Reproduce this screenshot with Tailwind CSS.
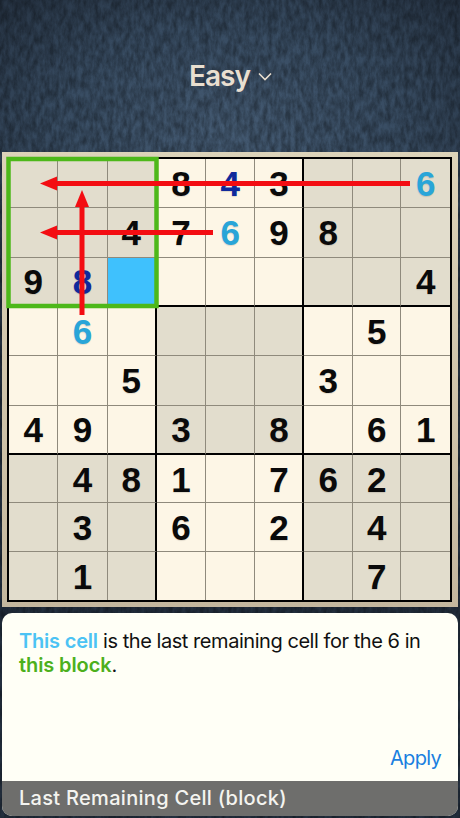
<!DOCTYPE html>
<html lang="en">
<head>
<meta charset="UTF-8">
<title>Sudoku hint</title>
<script src="https://cdn.jsdelivr.net/npm/@tailwindcss/browser@4"></script>
</head>
<body class="w-[460px] h-[818px] overflow-hidden relative bg-[#26384b] font-['Inter','Liberation_Sans',sans-serif]">

<!-- textured background -->
<div class="absolute inset-0 bg-[radial-gradient(ellipse_340px_200px_at_50%_130px,#445a72_0%,#384c62_50%,#232f3e_100%)]"></div>
<svg class="absolute inset-0 opacity-35" width="460" height="818">
    <filter id="grain">
        <feTurbulence type="fractalNoise" baseFrequency="0.22 0.09" numOctaves="4" seed="11"/>
        <feColorMatrix type="matrix" values="0 0 0 0 0  0 0 0 0 0  0 0 0 0 0  1.8 0 0 0 -0.45"/>
    </filter>
    <rect width="460" height="818" filter="url(#grain)"/>
</svg>

<div class="relative">
    <header class="h-[152px] flex items-center justify-center gap-[8px] pl-[1px]">
        <span class="text-[28px] font-semibold tracking-[-1px] text-[#e9dfd0]">Easy</span>
        <svg width="14" height="9" viewBox="0 0 14 9" class="mt-[1px]"><path d="M1 1.5 L7 7.5 L13 1.5" fill="none" stroke="#e9dfd0" stroke-width="1.6"/></svg>
    </header>

    <section class="relative mx-[2px] w-[456px] h-[455px] pt-[5px] pl-[5px] bg-gradient-to-b from-[#dcd3b9] to-[#c4b79e]">
        <div id="board" class="w-[445px] h-[445px] grid grid-cols-[49.3px_49.3px_49.4px_49.2px_49.2px_49.1px_48.5px_48.5px_48.5px] grid-rows-[49.3px_49.3px_49.4px_49.3px_49.3px_49.4px_48.3px_48.3px_48.4px] border-2 border-black font-['Liberation_Sans',sans-serif]"></div>
    </section>

    <!-- hint overlay -->
    <svg class="absolute left-0 top-0" width="460" height="620">
        <rect x="8.5" y="159" width="148" height="147" fill="none" stroke="#4db81a" stroke-width="4.5"/>
        <g fill="#f30d12" stroke="none">
            <rect x="56" y="181" width="354" height="5"/>
            <path d="M40 183.5 L57 176.5 L57 190.5 Z"/>
            <rect x="56" y="230" width="157" height="5"/>
            <path d="M40 232.5 L57 225.5 L57 239.5 Z"/>
            <rect x="79.5" y="206" width="5" height="109"/>
            <path d="M82 190 L75 207 L89 207 Z"/>
        </g>
    </svg>

    <section class="mt-[6px] mx-[2px] w-[456px] h-[203px] rounded-[10px] overflow-hidden bg-[#fffff6] flex flex-col">
        <div class="flex-1 relative pl-[17px] pt-[17px] pr-[20px] text-[20px] leading-[23.5px] tracking-[-0.45px] text-[#111]">
            <p><b class="font-semibold tracking-[-0.2px] text-[#4cc3f4]">This cell</b> is the last remaining cell for the 6 in <b class="font-semibold tracking-[-0.1px] text-[#4cb01c]">this block</b>.</p>
            <span class="absolute right-[17px] bottom-[11px] tracking-[-0.7px] text-[#1a7fe0]">Apply</span>
        </div>
        <footer class="h-[35px] bg-[#6e6e6c] pl-[17px] pb-[1px] flex items-center text-[20px] tracking-[0.3px] font-medium text-[#f4f4f0]">Last Remaining Cell (block)</footer>
    </section>
</div>

<script>
    const rows = [
        "   843  6",
        "  47698  ",
        "98      4",
        " 6     5 ",
        "  5   3  ",
        "49 3 8 61",
        " 481 762 ",
        " 3 6 2 4 ",
        " 1     7 "
    ];
    const blue = ["0,4", "2,1"];
    const cyan = ["0,8", "1,4", "3,1"];
    const board = document.getElementById("board");

    rows.forEach((row, r) => {
        for (let c = 0; c < 9; c++) {
            const cell = document.createElement("div");
            const key = r + "," + c;
            const shaded = (Math.floor(r / 3) + Math.floor(c / 3)) % 2 === 0;
            let cls = "flex items-center justify-center text-[35px] font-bold leading-none pt-[1px] [text-shadow:0_1px_1px_rgba(0,0,0,0.12)] ";
            cls += shaded ? "bg-[#e2ddcd] " : "bg-[#fdf6e6] ";
            if (key === "2,2") cls = "flex bg-[#3fc1fd] ";
            if (c < 8) cls += c % 3 === 2 ? "border-r-2 border-r-black " : "border-r border-r-[#8f8a7c] ";
            if (r < 8) cls += r % 3 === 2 ? "border-b-2 border-b-black " : "border-b border-b-[#8f8a7c] ";
            if (blue.includes(key)) cls += "text-[#0f2a9c]";
            else if (cyan.includes(key)) cls += "text-[#29a5d8]";
            else cls += "text-[#0a0a0a]";
            cell.className = cls;
            cell.textContent = row[c].trim();
            board.appendChild(cell);
        }
    });
</script>
</body>
</html>
